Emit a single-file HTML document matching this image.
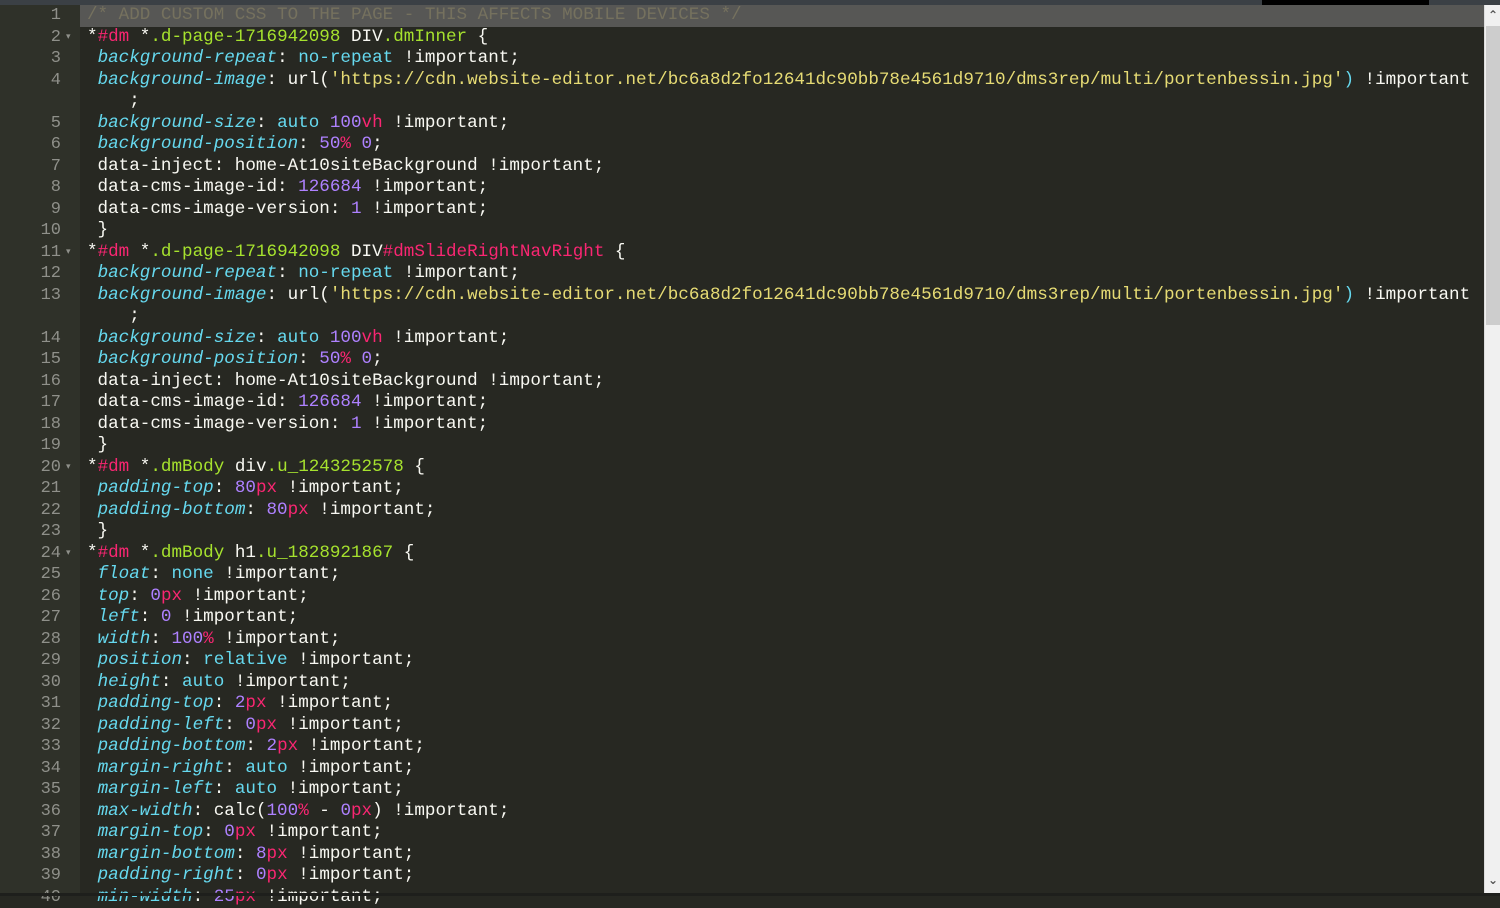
<!DOCTYPE html>
<html><head><meta charset="utf-8"><style>
html,body{margin:0;padding:0;width:1500px;height:896px;overflow:hidden;background:#272822;}
#top{position:absolute;left:0;top:0;width:1500px;height:5px;background:#3b4045;}
#topblk{position:absolute;left:1262px;top:0;width:167px;height:5px;background:#000;}
#gut{position:absolute;left:0;top:5px;width:80px;height:888px;background:#2f3129;}
#bot{position:absolute;left:0;top:893px;width:1500px;height:3px;background:#1e1f1c;}
#hl{position:absolute;left:80px;top:5px;width:1404px;height:21.5px;background:#575755;}
#hlg{position:absolute;left:0;top:5px;width:80px;height:21.5px;background:#272822;}
#sb{position:absolute;left:1484px;top:5px;width:16px;height:888px;background:#f0f0f0;border-left:1px solid #ddd;box-sizing:border-box;}
#th{position:absolute;left:1486px;top:26px;width:14px;height:299px;background:#cdcdcd;}
.ar{position:absolute;left:1486px;font:bold 12px "DejaVu Sans",sans-serif;color:#555;width:14px;text-align:center;}
.row{position:absolute;height:21.5px;line-height:21.5px;font-family:"Liberation Mono","DejaVu Sans Mono",monospace;font-size:17.6px;white-space:pre;color:#f8f8f2;}
.ln{position:absolute;left:0;width:61px;text-align:right;color:#8f908a;height:21.5px;line-height:21.5px;font-family:"Liberation Mono",monospace;font-size:17px;}
.fd{position:absolute;left:66px;width:10px;color:#8f908a;font-size:9px;line-height:21.5px;height:21.5px;font-family:"DejaVu Sans",sans-serif;}
.p{color:#66d9ef;font-style:italic}.v{color:#66d9ef}.n{color:#ae81ff}.u{color:#f92672}.s{color:#e6db74}.c{color:#a6e22e}.h{color:#f92672}.cm{color:#75715e}
</style></head><body>
<div id="top"></div><div id="topblk"></div>
<div id="gut"></div>
<div id="hl"></div>
<div id="sb"></div><div id="th"></div>
<div class="ar" style="top:8px">&#8963;</div>
<div class="ar" style="top:873px">&#8964;</div>
<div id="bot"></div>
<div id="code"></div>
<script>
var L=[
[1,0,'<span class="cm">/* ADD CUSTOM CSS TO THE PAGE - THIS AFFECTS MOBILE DEVICES */</span>'],
[2,1,'*<span class="h">#dm</span> *<span class="c">.d-page-1716942098</span> DIV<span class="c">.dmInner</span> {'],
[3,0,' <span class="p">background-repeat</span>: <span class="v">no-repeat</span> !important;'],
[4,0,' <span class="p">background-image</span>: url(<span class="s">\'https://cdn.website-editor.net/bc6a8d2fo12641dc90bb78e4561d9710/dms3rep/multi/portenbessin.jpg\'</span><span class="v">)</span> !important'],
[0,0,'    ;'],
[5,0,' <span class="p">background-size</span>: <span class="v">auto</span> <span class="n">100</span><span class="u">vh</span> !important;'],
[6,0,' <span class="p">background-position</span>: <span class="n">50</span><span class="u">%</span> <span class="n">0</span>;'],
[7,0,' data-inject: home-At10siteBackground !important;'],
[8,0,' data-cms-image-id: <span class="n">126684</span> !important;'],
[9,0,' data-cms-image-version: <span class="n">1</span> !important;'],
[10,0,' }'],
[11,1,'*<span class="h">#dm</span> *<span class="c">.d-page-1716942098</span> DIV<span class="h">#dmSlideRightNavRight</span> {'],
[12,0,' <span class="p">background-repeat</span>: <span class="v">no-repeat</span> !important;'],
[13,0,' <span class="p">background-image</span>: url(<span class="s">\'https://cdn.website-editor.net/bc6a8d2fo12641dc90bb78e4561d9710/dms3rep/multi/portenbessin.jpg\'</span><span class="v">)</span> !important'],
[0,0,'    ;'],
[14,0,' <span class="p">background-size</span>: <span class="v">auto</span> <span class="n">100</span><span class="u">vh</span> !important;'],
[15,0,' <span class="p">background-position</span>: <span class="n">50</span><span class="u">%</span> <span class="n">0</span>;'],
[16,0,' data-inject: home-At10siteBackground !important;'],
[17,0,' data-cms-image-id: <span class="n">126684</span> !important;'],
[18,0,' data-cms-image-version: <span class="n">1</span> !important;'],
[19,0,' }'],
[20,1,'*<span class="h">#dm</span> *<span class="c">.dmBody</span> div<span class="c">.u_1243252578</span> {'],
[21,0,' <span class="p">padding-top</span>: <span class="n">80</span><span class="u">px</span> !important;'],
[22,0,' <span class="p">padding-bottom</span>: <span class="n">80</span><span class="u">px</span> !important;'],
[23,0,' }'],
[24,1,'*<span class="h">#dm</span> *<span class="c">.dmBody</span> h1<span class="c">.u_1828921867</span> {'],
[25,0,' <span class="p">float</span>: <span class="v">none</span> !important;'],
[26,0,' <span class="p">top</span>: <span class="n">0</span><span class="u">px</span> !important;'],
[27,0,' <span class="p">left</span>: <span class="n">0</span> !important;'],
[28,0,' <span class="p">width</span>: <span class="n">100</span><span class="u">%</span> !important;'],
[29,0,' <span class="p">position</span>: <span class="v">relative</span> !important;'],
[30,0,' <span class="p">height</span>: <span class="v">auto</span> !important;'],
[31,0,' <span class="p">padding-top</span>: <span class="n">2</span><span class="u">px</span> !important;'],
[32,0,' <span class="p">padding-left</span>: <span class="n">0</span><span class="u">px</span> !important;'],
[33,0,' <span class="p">padding-bottom</span>: <span class="n">2</span><span class="u">px</span> !important;'],
[34,0,' <span class="p">margin-right</span>: <span class="v">auto</span> !important;'],
[35,0,' <span class="p">margin-left</span>: <span class="v">auto</span> !important;'],
[36,0,' <span class="p">max-width</span>: calc(<span class="n">100</span><span class="u">%</span> - <span class="n">0</span><span class="u">px</span>) !important;'],
[37,0,' <span class="p">margin-top</span>: <span class="n">0</span><span class="u">px</span> !important;'],
[38,0,' <span class="p">margin-bottom</span>: <span class="n">8</span><span class="u">px</span> !important;'],
[39,0,' <span class="p">padding-right</span>: <span class="n">0</span><span class="u">px</span> !important;'],
[40,0,' <span class="p">min-width</span>: <span class="n">25</span><span class="u">px</span> !important;']
];
var h='';
for(var i=0;i<L.length;i++){
 var t=5+i*21.5;
 if(L[i][0])h+='<div class="ln" style="top:'+t+'px">'+L[i][0]+'</div>';
 if(L[i][1])h+='<div class="fd" style="top:'+t+'px">&#9662;</div>';
 h+='<div class="row" style="left:87px;top:'+t+'px">'+L[i][2]+'</div>';
}
document.getElementById('code').innerHTML=h;
</script>
<div style="position:absolute;left:0;top:893px;width:1500px;height:3px;background:#1e1f1c;"></div>
</body></html>
